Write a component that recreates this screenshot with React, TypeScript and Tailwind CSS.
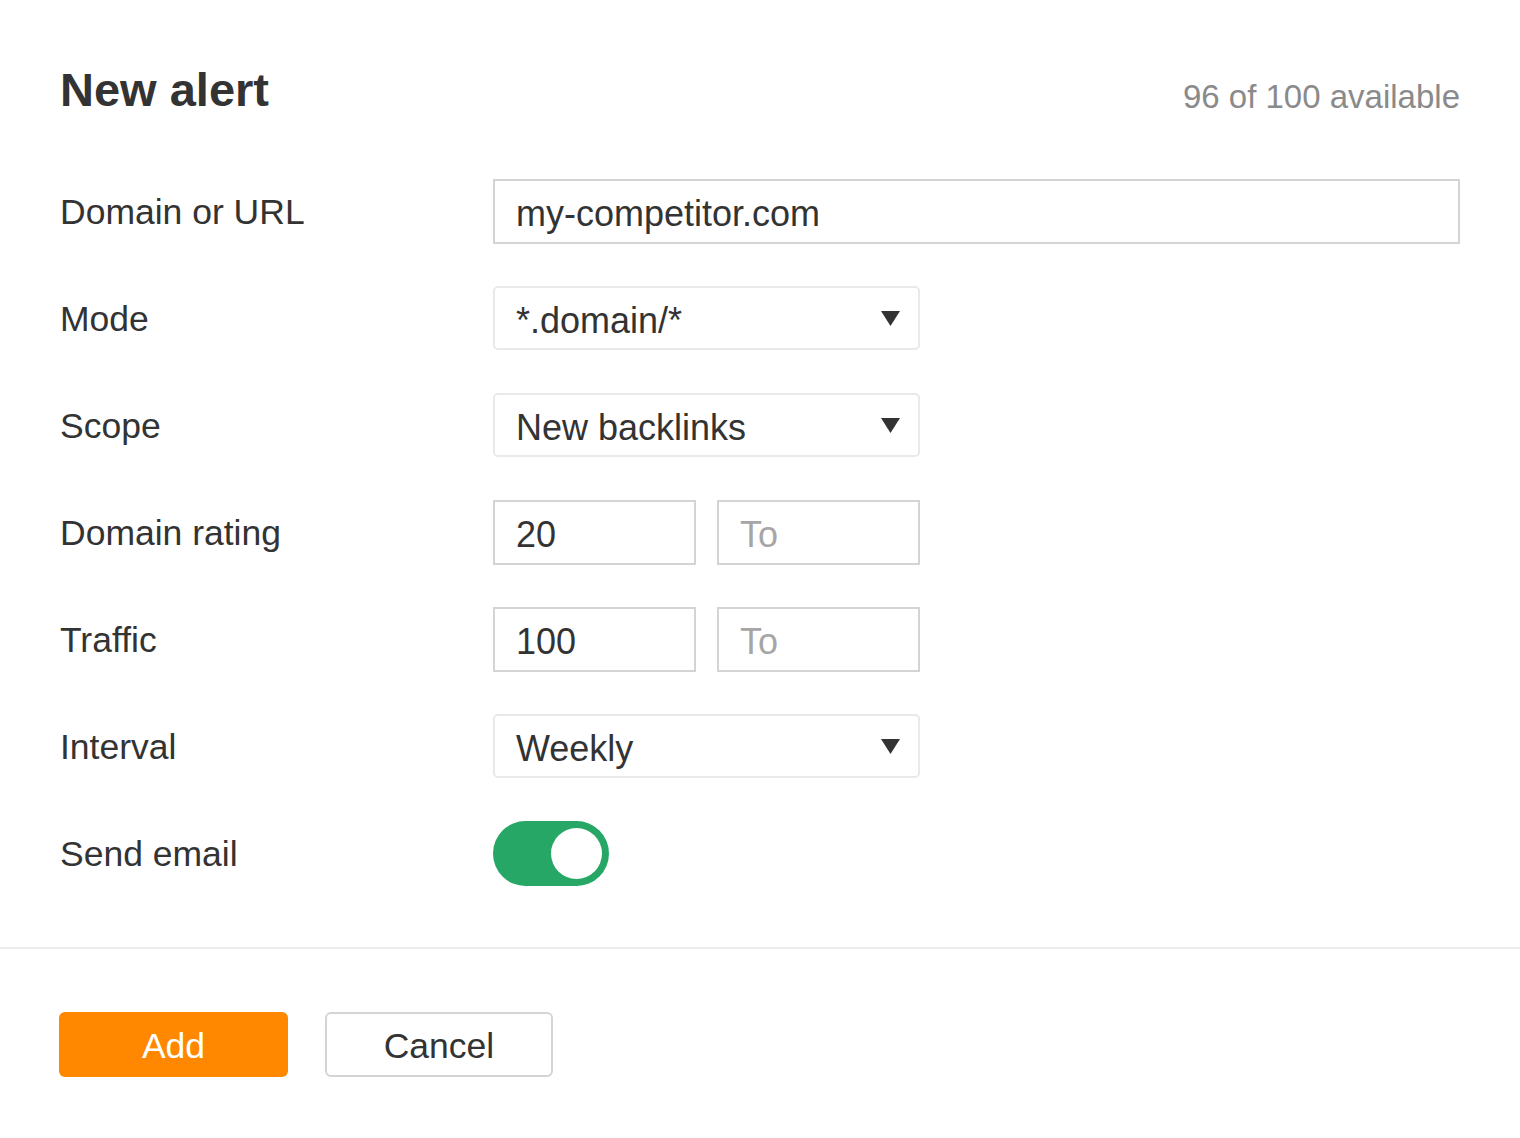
import React from "react";

const font = { fontFamily: '"Liberation Sans", Arial, Helvetica, sans-serif' };

function Arrow() {
  return (
    <svg width="19" height="15" viewBox="0 0 19 15" className="shrink-0">
      <path d="M0 0 H19 L9.5 15 Z" fill="#333333" />
    </svg>
  );
}

function Select({ value }: { value: string }) {
  return (
    <div className="flex h-[64px] w-[427px] items-center justify-between rounded-[5px] border-2 border-[#e9e9e9] bg-white pl-[21px] pr-[18px]">
      <span className="pt-[5px] text-[36px] leading-none text-[#333333]">{value}</span>
      <Arrow />
    </div>
  );
}

function Box({ value, placeholder, wide }: { value?: string; placeholder?: string; wide?: boolean }) {
  return (
    <div
      className={
        "flex h-[65px] items-center border-2 border-[#d4d4d4] bg-white pl-[21px] " +
        (wide ? "flex-1" : "w-[203px]")
      }
    >
      {value ? (
        <span className="pt-[5px] text-[36px] leading-none text-[#333333]">{value}</span>
      ) : (
        <span className="pt-[5px] text-[36px] leading-none text-[#a6a6a6]">{placeholder}</span>
      )}
    </div>
  );
}

function Row({ label, children }: { label: string; children: React.ReactNode }) {
  return (
    <div className="flex h-[64px] items-center">
      <div className="w-[433px] shrink-0 pt-[4px] text-[35.5px] leading-none text-[#333333]">{label}</div>
      <div className="flex flex-1 items-center">{children}</div>
    </div>
  );
}

export default function App() {
  return (
    <div style={font} className="min-h-[1138px] w-full bg-white">
      <div className="px-[60px] pt-[66px]">
        <div className="flex items-start justify-between">
          <h1 className="text-[47px] font-bold leading-none text-[#333333]">New alert</h1>
          <span className="mt-[14px] text-[33px] leading-none text-[#8a8a8a]">96 of 100 available</span>
        </div>

        <div className="mt-[66px] flex flex-col gap-[43px]">
          <Row label="Domain or URL">
            <Box value="my-competitor.com" wide />
          </Row>
          <Row label="Mode">
            <Select value="*.domain/*" />
          </Row>
          <Row label="Scope">
            <Select value="New backlinks" />
          </Row>
          <Row label="Domain rating">
            <div className="flex gap-[21px]">
              <Box value="20" />
              <Box placeholder="To" />
            </div>
          </Row>
          <Row label="Traffic">
            <div className="flex gap-[21px]">
              <Box value="100" />
              <Box placeholder="To" />
            </div>
          </Row>
          <Row label="Interval">
            <Select value="Weekly" />
          </Row>
          <Row label="Send email">
            <div className="flex h-[65px] w-[116px] items-center justify-end rounded-full bg-[#27a765] pr-[7px]">
              <div className="h-[51px] w-[51px] rounded-full bg-white" />
            </div>
          </Row>
        </div>
      </div>

      <div className="mt-[62px] border-t-2 border-[#ececec] px-[59px] pt-[63px]">
        <div className="flex gap-[37px]">
          <button className="flex h-[65px] w-[229px] items-center justify-center rounded-[6px] bg-[#ff8800] pt-[5px] text-[35.5px] leading-none text-white">
            Add
          </button>
          <button className="flex h-[65px] w-[228px] items-center justify-center rounded-[6px] border-2 border-[#d4d4d4] bg-white pt-[5px] text-[35.5px] leading-none text-[#333333]">
            Cancel
          </button>
        </div>
      </div>
    </div>
  );
}
